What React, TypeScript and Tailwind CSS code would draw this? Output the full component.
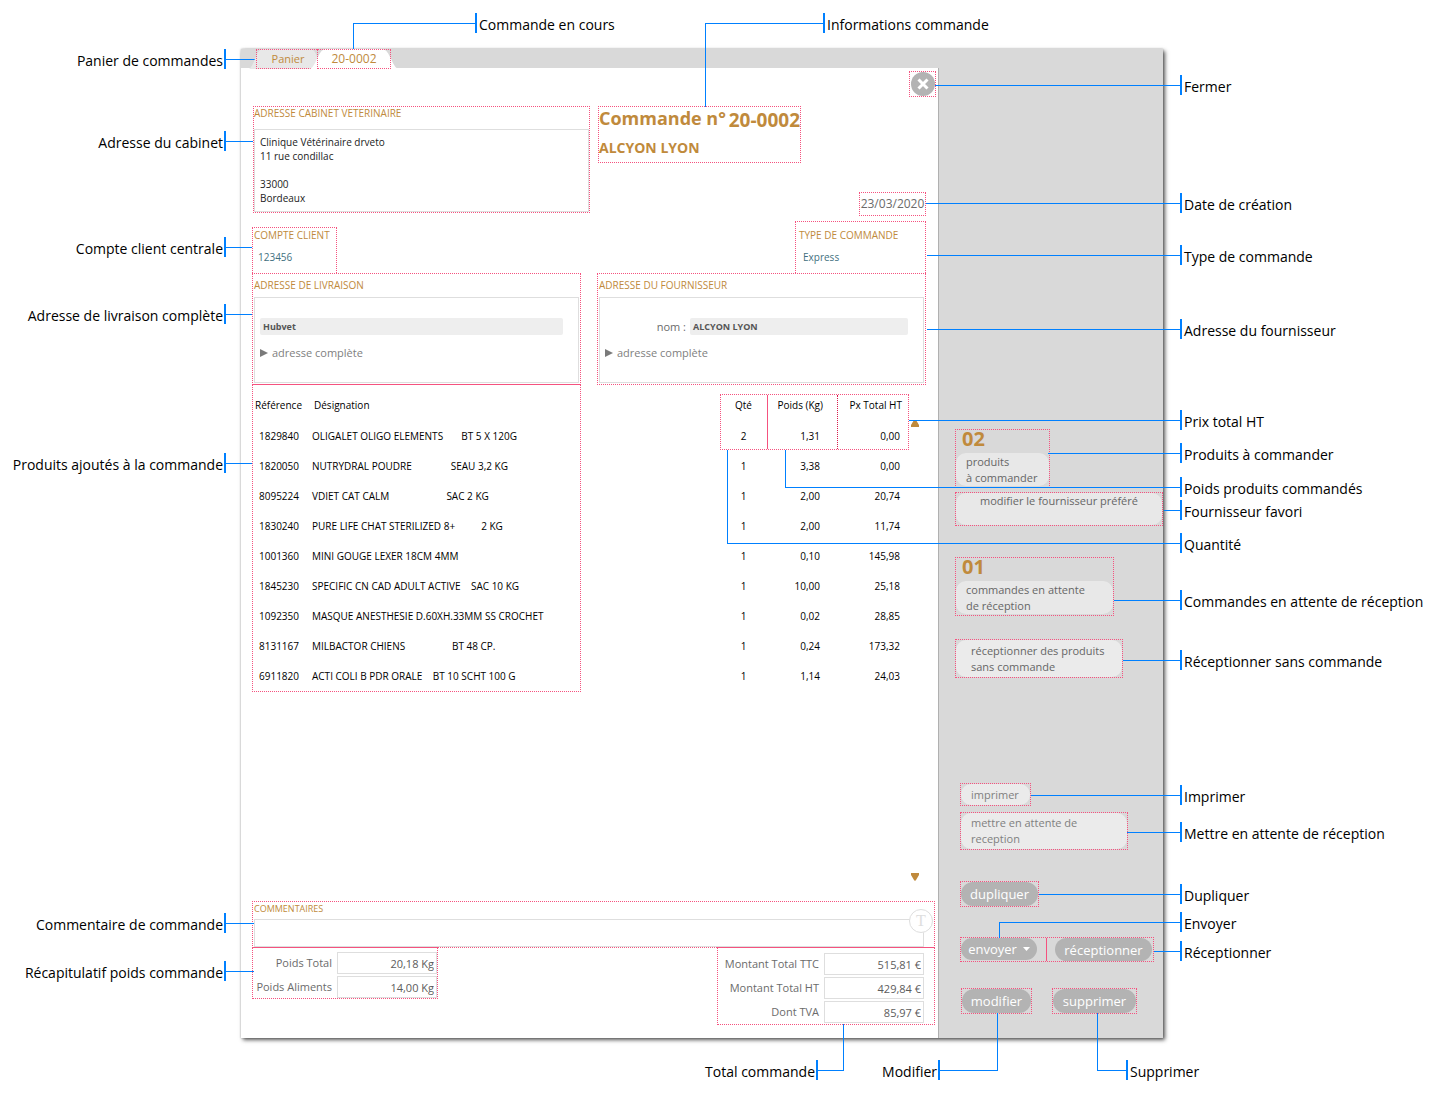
import React from "react";
import type { ReactNode } from "react";
import { clsx } from "clsx";

interface Product {
  ref: string;
  name: string;
  qty: string;
  weight: string;
  price: string;
}

interface Note {
  text: string;
  top: string;
  line: string;
}

const products: Product[] = [
  { ref: "1829840", name: "OLIGALET OLIGO ELEMENTS       BT 5 X 120G", qty: "2", weight: "1,31", price: "0,00" },
  { ref: "1820050", name: "NUTRYDRAL POUDRE               SEAU 3,2 KG", qty: "1", weight: "3,38", price: "0,00" },
  { ref: "8095224", name: "VDIET CAT CALM                      SAC 2 KG", qty: "1", weight: "2,00", price: "20,74" },
  { ref: "1830240", name: "PURE LIFE CHAT STERILIZED 8+          2 KG", qty: "1", weight: "2,00", price: "11,74" },
  { ref: "1001360", name: "MINI GOUGE LEXER 18CM 4MM", qty: "1", weight: "0,10", price: "145,98" },
  { ref: "1845230", name: "SPECIFIC CN CAD ADULT ACTIVE    SAC 10 KG", qty: "1", weight: "10,00", price: "25,18" },
  { ref: "1092350", name: "MASQUE ANESTHESIE D.60XH.33MM SS CROCHET", qty: "1", weight: "0,02", price: "28,85" },
  { ref: "8131167", name: "MILBACTOR CHIENS                  BT 48 CP.", qty: "1", weight: "0,24", price: "173,32" },
  { ref: "6911820", name: "ACTI COLI B PDR ORALE    BT 10 SCHT 100 G", qty: "1", weight: "1,14", price: "24,03" },
];

const leftNotes: Note[] = [
  { text: "Panier de commandes", top: "top-[49px]", line: "w-[30px]" },
  { text: "Adresse du cabinet", top: "top-[131px]", line: "w-[27px]" },
  { text: "Compte client centrale", top: "top-[237px]", line: "w-[26px]" },
  { text: "Adresse de livraison complète", top: "top-[304px]", line: "w-[26px]" },
  { text: "Produits ajoutés à la commande", top: "top-[453px]", line: "w-[26px]" },
  { text: "Commentaire de commande", top: "top-[913px]", line: "w-[28px]" },
  { text: "Récapitulatif poids commande", top: "top-[961px]", line: "w-[28px]" },
];

const rightNotes: Note[] = [
  { text: "Fermer", top: "top-[75px]", line: "w-[245px] border-t" },
  { text: "Date de création", top: "top-[193px]", line: "w-[254px] border-t" },
  { text: "Type de commande", top: "top-[245px]", line: "w-[253px] border-t" },
  { text: "Adresse du fournisseur", top: "top-[319px]", line: "w-[253px] border-t" },
  { text: "Prix total HT", top: "top-[410px]", line: "w-[271px] border-t" },
  { text: "Produits à commander", top: "top-[443px]", line: "w-[132px] border-t" },
  { text: "Poids produits commandés", top: "top-[477px]", line: "w-[395px] h-[38px] border-b border-l bottom-[9px]" },
  { text: "Fournisseur favori", top: "top-[500px]", line: "w-[16px] border-t" },
  { text: "Quantité", top: "top-[533px]", line: "w-[453px] h-[94px] border-b border-l bottom-[9px]" },
  { text: "Commandes en attente de réception", top: "top-[590px]", line: "w-[66px] border-t" },
  { text: "Réceptionner sans commande", top: "top-[650px]", line: "w-[57px] border-t" },
  { text: "Imprimer", top: "top-[785px]", line: "w-[149px] border-t" },
  { text: "Mettre en attente de réception", top: "top-[822px]", line: "w-[53px] border-t" },
  { text: "Dupliquer", top: "top-[884px]", line: "w-[141px] border-t" },
  { text: "Envoyer", top: "top-[912px]", line: "w-[181px] h-[16px] border-t border-l" },
  { text: "Réceptionner", top: "top-[941px]", line: "w-[26px] border-t" },
];

const noteText = "whitespace-nowrap text-sm leading-[23px] text-black";
const outline = "border border-dotted border-[#f5527f]";
const heading = "text-[10px] leading-3 text-[#c08a3c]";
const pill = "rounded-full bg-[#b3b3b3] text-[13px] leading-4 text-white";
const softButton = "rounded-[10px] bg-[#ebebeb] text-left text-[11px] leading-4";

function Tick() {
  return <span className="h-5 w-[2px] shrink-0 bg-[#0080ff]" />;
}

function LeftNote({ note }: { note: Note }) {
  return (
    <div className={clsx("absolute left-[226px] z-10 flex h-5 items-center", note.top)}>
      <div className="absolute right-full flex h-5 gap-px">
        <span className={noteText}>{note.text}</span>
        <Tick />
      </div>
      <span className={clsx("h-px bg-[#0080ff]", note.line)} />
    </div>
  );
}

function RightNote({ note }: { note: Note }) {
  return (
    <div className={clsx("absolute left-[17px] z-10 flex h-5 gap-[2px]", note.top)}>
      <span
        className={clsx(
          "absolute right-full border-[#0080ff]",
          !note.line.includes("bottom") && "top-[10px]",
          note.line,
        )}
      />
      <Tick />
      <span className={noteText}>{note.text}</span>
    </div>
  );
}

function TabShape({ fill }: { fill: string }) {
  return (
    <svg
      className="absolute top-0 -left-[7px] h-5 w-[calc(100%+14px)]"
      viewBox="0 0 88 20"
      preserveAspectRatio="none"
      aria-hidden="true"
    >
      <path d="M0 20 C4 18 6 11 9 6 C11 2 13 0 17 0 H70 C75 0 77 2 79 6 C82 11 84 18 88 20 Z" fill={fill} />
    </svg>
  );
}

function AddressCard({ title, children }: { title: string; children: ReactNode }) {
  return (
    <section className={clsx("flex h-[112px] flex-1 flex-col px-px pb-px", outline)}>
      <h2 className={clsx("pt-[5px] pb-[6px]", heading)}>{title}</h2>
      <div className="flex flex-1 flex-col border border-[#dedede] px-[5px] pt-5">
        {children}
        <button className="mt-[10px] flex items-center gap-1 text-left text-[11px] leading-4 text-[#808080]">
          <svg className="h-2 w-2" viewBox="0 0 8 8" aria-hidden="true">
            <path d="M0 0 L8 4 L0 8 Z" fill="#7a7a7a" />
          </svg>
          adresse complète
        </button>
      </div>
    </section>
  );
}

function AmountRow({ id, label, value }: { id: string; label: string; value: string }) {
  return (
    <div className="flex items-center justify-end gap-[5px]">
      <label htmlFor={id} className="whitespace-nowrap text-[11px] leading-4 text-[#6b6b6b]">
        {label}
      </label>
      <input
        id={id}
        readOnly
        defaultValue={value}
        className="h-[22px] w-[100px] border border-[#dedede] bg-white px-[2px] text-right text-[11px] text-[#5c5c5c] outline-none"
      />
    </div>
  );
}

function OrderTabs() {
  return (
    <nav className="relative z-10 flex h-[19px] pl-[15px]">
      <button className="relative flex h-5 w-[61px] justify-center text-[11px] leading-5 text-[#c08a3c]">
        <TabShape fill="#e8e8e8" />
        <span className={clsx("absolute inset-0 border-r-0", outline)} />
        <span className="relative pl-[3px]">Panier</span>
      </button>
      <div className="relative">
        <button className="relative flex h-5 w-[74px] justify-center text-xs leading-5 text-[#c08a3c]">
          <TabShape fill="#ffffff" />
          <span className={clsx("absolute inset-0", outline)} />
          <span className="relative">20-0002</span>
        </button>
        <div className="absolute bottom-full left-[36px] flex h-[26px] w-[122px] border-t border-l border-[#0080ff]">
          <div className="absolute -top-[11px] left-full flex h-5 gap-[2px]">
            <Tick />
            <span className={noteText}>Commande en cours</span>
          </div>
        </div>
      </div>
    </nav>
  );
}

function OrderHeader() {
  return (
    <>
      <div className="-mr-[10px] flex justify-end pt-[3px]">
        <button
          aria-label="Fermer"
          className={clsx("flex h-[26px] w-[27px] items-center justify-center", outline)}
        >
          <svg className="h-6 w-6 shrink-0" viewBox="0 0 24 24" aria-hidden="true">
            <circle cx="12" cy="12" r="12" fill="#b3b3b3" />
            <path d="M7.5 7.5 L16.5 16.5 M16.5 7.5 L7.5 16.5" stroke="#fff" strokeWidth="3" />
          </svg>
        </button>
      </div>

      <div className="flex items-start gap-2 pt-[9px] pl-px">
        <section className={clsx("flex h-[107px] w-[337px] flex-col", outline)}>
          <h2 className={clsx("pb-[10px]", heading)}>ADRESSE CABINET VETERINAIRE</h2>
          <address className="flex-1 border border-[#dedede] px-[5px] pt-[5px] text-[10px] leading-[14px] text-[#222] not-italic">
            Clinique Vétérinaire drveto
            <br />
            11 rue condillac
            <br />
            <br />
            33000
            <br />
            Bordeaux
          </address>
        </section>

        <section className={clsx("relative h-[57px] w-[203px] text-[#c08a3c]", outline)}>
          <h1 className="flex justify-between text-lg leading-[22px] font-bold whitespace-nowrap">
            <span>Commande n°</span>
            <span className="pt-[2px] text-[19px]">20-0002</span>
          </h1>
          <p className="pt-[7px] text-sm leading-5 font-bold">ALCYON LYON</p>
          <div className="absolute bottom-full left-[106px] z-10 h-[84px] w-[118px] border-t border-l border-[#0080ff]">
            <div className="absolute -top-[11px] left-full flex h-5 gap-[2px]">
              <Tick />
              <span className={noteText}>Informations commande</span>
            </div>
          </div>
        </section>
      </div>

      <div className="-mt-[21px] flex justify-end">
        <time className={clsx("h-6 w-[67px] text-center text-xs leading-[22px] text-[#6b6b6b]", outline)}>
          23/03/2020
        </time>
      </div>

      <div className="flex items-end justify-between pt-[5px]">
        <section className={clsx("h-[46px] w-[85px] border-b-0 pl-px", outline)}>
          <h2 className={clsx("pt-[1px] whitespace-nowrap", heading)}>COMPTE CLIENT</h2>
          <p className="pt-2 pl-1 text-[10px] leading-4 text-[#3f7080]">123456</p>
        </section>
        <section className={clsx("h-[52px] w-[131px] border-b-0 pl-[3px]", outline)}>
          <h2 className={clsx("pt-[7px]", heading)}>TYPE DE COMMANDE</h2>
          <p className="pt-2 pl-1 text-[10px] leading-4 text-[#3f7080]">Express</p>
        </section>
      </div>

      <div className="flex gap-4">
        <AddressCard title="ADRESSE DE LIVRAISON">
          <p className="mr-[10px] h-[17px] rounded-xs bg-[#eee] px-[3px] text-[9px] leading-[18px] font-bold text-[#555]">
            Hubvet
          </p>
        </AddressCard>
        <AddressCard title="ADRESSE DU FOURNISSEUR">
          <div className="mr-[10px] flex h-[17px] items-center gap-1">
            <span className="w-[81px] text-right text-[11px] leading-4 text-[#6b6b6b]">nom :</span>
            <p className="flex-1 rounded-xs bg-[#eee] px-[3px] text-[9px] leading-[17px] font-bold text-[#555]">
              ALCYON LYON
            </p>
          </div>
        </AddressCard>
      </div>
    </>
  );
}

function ProductTable() {
  return (
    <div className="relative flex min-h-[516px]">
      <div className="relative flex-1">
        <table className="w-full table-fixed text-[10px] text-black">
          <colgroup>
            <col className="w-[60px]" />
            <col />
            <col className="w-[47px]" />
            <col className="w-[70px]" />
            <col className="w-[72px]" />
          </colgroup>
          <thead>
            <tr className="h-[36px] whitespace-nowrap">
              <th className="pt-1 pl-[3px] text-left font-normal">Référence</th>
              <th className="pt-1 pl-[2px] text-left font-normal">Désignation</th>
              <th className="pt-1 font-normal">Qté</th>
              <th className="pt-1 pr-[14px] text-right font-normal">Poids (Kg)</th>
              <th className="pt-1 pr-[7px] text-right font-normal">Px Total HT</th>
            </tr>
          </thead>
          <tbody>
            {products.map((product) => (
              <tr key={product.ref} className="h-[30px]">
                <td className="pl-[7px]">{product.ref}</td>
                <td className="whitespace-pre">{product.name}</td>
                <td className="text-center">{product.qty}</td>
                <td className="pr-[17px] text-right">{product.weight}</td>
                <td className="pr-[9px] text-right">{product.price}</td>
              </tr>
            ))}
          </tbody>
        </table>

        {/* highlighted cells of the first line */}
        <div className={clsx("pointer-events-none absolute top-[9px] right-0 flex h-[56px] w-[189px]", outline)}>
          <span className="w-[47px] border-r border-[#f5527f]" />
          <span className="w-[70px] border-r border-dotted border-[#d81b4c]" />
        </div>
      </div>

      <div className={clsx("pointer-events-none absolute top-0 left-0 h-[307px] w-[calc(50%-8px)] border-t-0", outline)} />
      <div className="absolute -top-px left-0 h-px w-[calc(50%-8px)] bg-[#f5527f]" />

      <div className="flex w-[17px] flex-col items-center justify-between pt-[35px] pr-[5px] pb-5">
        <button aria-label="Monter">
          <svg className="block h-2 w-2" viewBox="0 0 8 8" aria-hidden="true">
            <path d="M3 0 H5 L8 5 V7 H0 V5 Z" fill="#c08a3c" />
          </svg>
        </button>
        <button aria-label="Descendre">
          <svg className="block h-2 w-2" viewBox="0 0 8 8" aria-hidden="true">
            <path d="M0 0 H8 V2 L5 7 L4 8 L3 7 L0 2 Z" fill="#c08a3c" />
          </svg>
        </button>
      </div>
    </div>
  );
}

function OrderFooter() {
  return (
    <div className="-mr-[9px] pb-[13px]">
      <div className={clsx("relative flex h-[47px] flex-col pl-px", outline)}>
        <label htmlFor="comment" className="pt-px text-[9px] leading-3 text-[#c08a3c]">
          COMMENTAIRES
        </label>
        <input id="comment" className="mt-[4px] mr-[10px] h-7 border border-[#dedede] outline-none" />
        <button
          aria-label="Mise en forme"
          className="absolute top-[7px] right-px h-6 w-6 rounded-full border border-[#dedede] bg-white font-['Liberation_Serif',serif] text-base leading-5 text-[#dedede]"
        >
          T
        </button>
      </div>

      <div className="-mt-px flex items-start justify-between">
        <div className={clsx("flex h-[52px] w-[186px] flex-col gap-[2px] pt-1", outline)}>
          <AmountRow id="total-weight" label="Poids Total" value="20,18 Kg" />
          <AmountRow id="food-weight" label="Poids Aliments" value="14,00 Kg" />
        </div>
        <div
          className={clsx(
            "relative flex h-[78px] w-[218px] flex-col gap-[2px] pt-[5px] pr-[10px]",
            outline,
            "[border-top-style:solid]",
          )}
        >
          <AmountRow id="total-ttc" label="Montant Total TTC" value="515,81 €" />
          <AmountRow id="total-ht" label="Montant Total HT" value="429,84 €" />
          <AmountRow id="vat" label="Dont TVA" value="85,97 €" />
          <div className="absolute top-full right-[90px] h-[47px] w-[26px] border-r border-b border-[#0080ff]">
            <div className="absolute right-full -bottom-[10px] flex h-5 gap-px">
              <span className={noteText}>Total commande</span>
              <Tick />
            </div>
          </div>
        </div>
      </div>
    </div>
  );
}

function Counter({ value, children }: { value: string; children: ReactNode }) {
  return (
    <>
      <strong className="block pl-[6px] text-xl leading-[18px] text-[#c08a3c]">{value}</strong>
      <button className="mt-[5px] w-full rounded-[10px] bg-[#e8e8e8] pt-px pl-[10px] text-left text-[11px] leading-4 text-[#666]">
        {children}
      </button>
    </>
  );
}

function Sidebar() {
  return (
    <aside className="flex w-[224px] shrink-0 flex-col items-start bg-[#d9d9d9] pt-[380px] pl-4">
      <div className={clsx("h-[59px] w-[95px] border-b-0", outline)}>
        <Counter value="02">
          produits
          <br />à commander
        </Counter>
      </div>
      <div className={clsx("mt-1 flex h-[34px] w-[208px]", outline)}>
        <button className="w-full rounded-[10px] bg-[#e8e8e8] pb-4 text-center text-[11px] leading-4 text-[#666]">
          modifier le fournisseur préféré
        </button>
      </div>
      <div className={clsx("mt-[31px] h-[59px] w-[159px]", outline)}>
        <Counter value="01">
          commandes en attente
          <br />
          de réception
        </Counter>
      </div>
      <div className={clsx("mt-[23px] flex h-[39px] w-[168px]", outline)}>
        <button className={clsx("w-full pl-[15px] text-[#666]", softButton)}>
          réceptionner des produits
          <br />
          sans commande
        </button>
      </div>

      <div className="flex flex-col items-start pt-[105px] pl-[5px]">
        <div className={clsx("flex h-[23px] w-[71px]", outline)}>
          <button className={clsx("w-full pl-[10px] text-[#808080]", softButton)}>imprimer</button>
        </div>
        <div className={clsx("mt-[6px] flex h-[38px] w-[168px]", outline)}>
          <button className={clsx("w-full pl-[10px] text-[#808080]", softButton)}>
            mettre en attente de
            <br />
            reception
          </button>
        </div>
        <div className={clsx("mt-[31px] flex h-[26px] w-[79px]", outline)}>
          <button className={clsx("w-full", pill)}>dupliquer</button>
        </div>

        <div className={clsx("mt-[30px] flex h-[25px] w-[194px] items-start", outline)}>
          <div className="flex h-full w-[86px] border-r border-[#f5527f]">
            <button className={clsx("flex h-[22px] w-[76px] items-center justify-center gap-[6px]", pill)}>
              envoyer
              <svg className="h-1 w-[7px]" viewBox="0 0 7 4" aria-hidden="true">
                <path d="M0 0 H7 L3.5 4 Z" fill="#fff" />
              </svg>
            </button>
          </div>
          <div className="flex h-full flex-1 pl-2">
            <button className={clsx("w-[97px]", pill)}>réceptionner</button>
          </div>
        </div>

        <div className="flex gap-5 pt-[26px] pl-px">
          <div className={clsx("relative flex h-[26px] w-[71px]", outline)}>
            <button className={clsx("w-full", pill)}>modifier</button>
            <div className="absolute top-full right-[33px] h-[58px] w-[58px] border-r border-b border-[#0080ff]">
              <div className="absolute right-full -bottom-[10px] flex h-5 gap-px">
                <span className={noteText}>Modifier</span>
                <Tick />
              </div>
            </div>
          </div>
          <div className={clsx("relative flex h-[26px] w-[85px]", outline)}>
            <button className={clsx("w-full", pill)}>supprimer</button>
            <div className="absolute top-full left-[44px] h-[58px] w-[29px] border-b border-l border-[#0080ff]">
              <div className="absolute -bottom-[10px] left-full flex h-5 gap-[2px]">
                <Tick />
                <span className={noteText}>Supprimer</span>
              </div>
            </div>
          </div>
        </div>
      </div>
    </aside>
  );
}

export default function App() {
  return (
    <div className="flex bg-white font-['Open_Sans','Noto_Sans',sans-serif]">
      <div className="relative w-[241px] shrink-0">
        {leftNotes.map((note) => (
          <LeftNote key={note.text} note={note} />
        ))}
      </div>

      <main className="mt-[49px] mb-[61px] flex flex-1 bg-[#d9d9d9] shadow-[2px_2px_4px_rgba(0,0,0,0.65),0_0_2px_rgba(0,0,0,0.25)]">
        <div className="flex flex-1 flex-col">
          <OrderTabs />
          <div className="flex-1 border-r border-[#b0b0b0] bg-white pr-3 pl-[11px]">
            <OrderHeader />
            <ProductTable />
            <OrderFooter />
          </div>
        </div>
        <Sidebar />
      </main>

      <div className="relative w-[276px] shrink-0">
        {rightNotes.map((note) => (
          <RightNote key={note.text} note={note} />
        ))}
      </div>
    </div>
  );
}
